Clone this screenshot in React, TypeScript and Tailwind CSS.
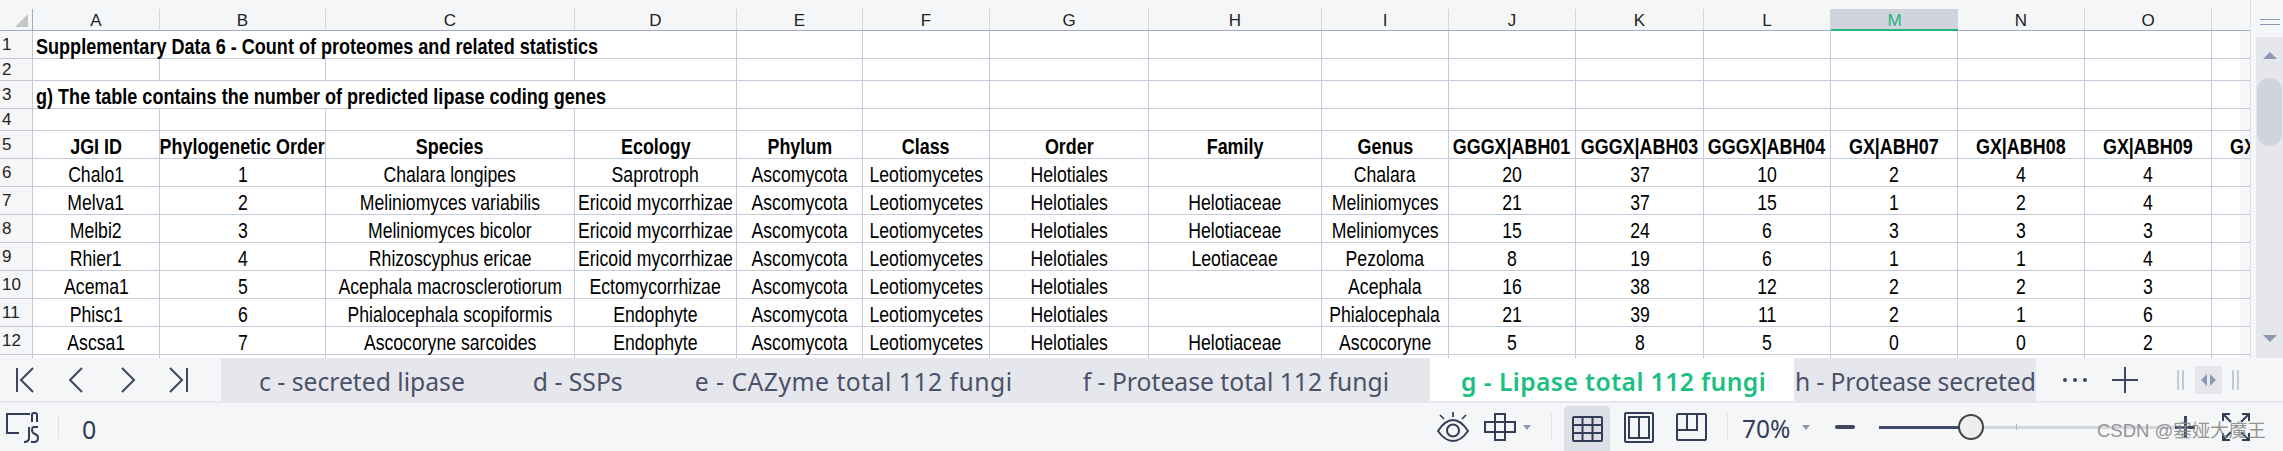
import type { ReactNode } from "react";

const columns = ["A", "B", "C", "D", "E", "F", "G", "H", "I", "J", "K", "L", "M", "N", "O", ""];

const headers = [
  "JGI ID",
  "Phylogenetic Order",
  "Species",
  "Ecology",
  "Phylum",
  "Class",
  "Order",
  "Family",
  "Genus",
  "GGGX|ABH01",
  "GGGX|ABH03",
  "GGGX|ABH04",
  "GX|ABH07",
  "GX|ABH08",
  "GX|ABH09",
  "GX|ABH10",
];

const A = "Ascomycota";
const L = "Leotiomycetes";
const H = "Helotiales";

const rows = [
  ["Chalo1", "1", "Chalara longipes", "Saprotroph", A, L, H, "", "Chalara", "20", "37", "10", "2", "4", "4", ""],
  ["Melva1", "2", "Meliniomyces variabilis", "Ericoid mycorrhizae", A, L, H, "Helotiaceae", "Meliniomyces", "21", "37", "15", "1", "2", "4", ""],
  ["Melbi2", "3", "Meliniomyces bicolor", "Ericoid mycorrhizae", A, L, H, "Helotiaceae", "Meliniomyces", "15", "24", "6", "3", "3", "3", ""],
  ["Rhier1", "4", "Rhizoscyphus ericae", "Ericoid mycorrhizae", A, L, H, "Leotiaceae", "Pezoloma", "8", "19", "6", "1", "1", "4", ""],
  ["Acema1", "5", "Acephala macrosclerotiorum", "Ectomycorrhizae", A, L, H, "", "Acephala", "16", "38", "12", "2", "2", "3", ""],
  ["Phisc1", "6", "Phialocephala scopiformis", "Endophyte", A, L, H, "", "Phialocephala", "21", "39", "11", "2", "1", "6", ""],
  ["Ascsa1", "7", "Ascocoryne sarcoides", "Endophyte", A, L, H, "Helotiaceae", "Ascocoryne", "5", "8", "5", "0", "0", "2", ""],
];

const tabs = [
  { label: "c - secreted lipase", className: "px-[34px]" },
  { label: "d - SSPs", className: "px-[34px]" },
  { label: "e - CAZyme total 112 fungi", className: "pl-[38px] pr-[34px] tracking-[0.5px]" },
  { label: "f - Protease total 112 fungi", className: "pl-[36px] pr-[34px]" },
];

const gridLine = "border-r border-b border-[#c6cadb]";
const cell = `${gridLine} flex items-center justify-center pt-[5px] whitespace-nowrap text-[21.5px] text-black font-['Liberation_Sans',sans-serif]`;
const rowHead = "border-r border-b border-[#c3c7d4] bg-[#f5f6f8] flex items-center pt-[1px] pl-[2px] text-[17px] text-[#222] font-['Liberation_Sans',sans-serif]";

function RowHead({ n }: { n: number }) {
  return <div className={rowHead}>{n}</div>;
}

// the sheet font is Arial Narrow, which isn't installed, so squeeze Liberation Sans
function Cell({ children }: { children: ReactNode }) {
  return (
    <div className={cell}>
      <span className="shrink-0 scale-x-[0.82]">{children}</span>
    </div>
  );
}

function HeaderCell({ children }: { children: ReactNode }) {
  return (
    <div className={`${cell} font-bold`}>
      <span className="shrink-0 scale-x-[0.833]">{children}</span>
    </div>
  );
}

function TitleCell({ children }: { children: ReactNode }) {
  return (
    <div className={`${cell} col-span-4 !justify-start pl-[3px] font-bold`}>
      <span className="shrink-0 origin-left scale-x-[0.84]">{children}</span>
    </div>
  );
}

function Sheet() {
  return (
    <div className="w-[2251px] pt-[9px] overflow-hidden border-r border-[#dcdee4]">
      <div className="grid grid-cols-[33px_127px_166px_249px_162px_126px_127px_159px_173px_127px_127px_128px_127px_127px_127px_127px_127px] grid-rows-[22px_28px_22px_28px_22px_28px_28px_28px_28px_28px_28px_28px_28px_28px] w-[2240px] bg-white">
        <div className="border-r border-b border-[#a3abc4] bg-[#f5f6f8] flex items-end justify-end pr-[4px] pb-[3px]">
          <svg width="13" height="13" viewBox="0 0 13 13">
            <path d="M13 0V13H0Z" fill="#c4c4c4" />
          </svg>
        </div>
        {columns.map((c, i) => (
          <div
            key={i}
            className={
              c === "M"
                ? "border-b-2 border-[#1fb87f] bg-[#d1d4dc] flex items-center justify-center pt-[3px] text-[17px] text-[#1fb87f] font-['Liberation_Sans',sans-serif]"
                : "border-r border-b border-r-[#d3d6de] border-b-[#a3abc4] bg-[#f5f6f8] flex items-center justify-center pt-[3px] text-[17px] text-[#222] font-['Liberation_Sans',sans-serif]"
            }
          >
            {c}
          </div>
        ))}

        <RowHead n={1} />
        <TitleCell>Supplementary Data 6 - Count of proteomes and related statistics</TitleCell>
        {columns.slice(4).map((_, i) => (
          <div key={i} className={gridLine} />
        ))}

        <RowHead n={2} />
        {columns.map((_, i) => (
          <div key={i} className={gridLine} />
        ))}

        <RowHead n={3} />
        <TitleCell>g) The table contains the number of predicted lipase coding genes</TitleCell>
        {columns.slice(4).map((_, i) => (
          <div key={i} className={gridLine} />
        ))}

        <RowHead n={4} />
        {columns.map((_, i) => (
          <div key={i} className={gridLine} />
        ))}

        <RowHead n={5} />
        {headers.map((h) => (
          <HeaderCell key={h}>{h}</HeaderCell>
        ))}

        {rows.map((row, i) => (
          <div key={row[0]} className="contents">
            <RowHead n={i + 6} />
            {row.map((value, j) => (
              <Cell key={j}>{value}</Cell>
            ))}
          </div>
        ))}

        <div className={rowHead}></div>
        {columns.map((_, i) => (
          <div key={i} className={gridLine} />
        ))}
      </div>
    </div>
  );
}

function VScroll() {
  return (
    <div className="w-[32px] flex flex-col">
      <div className="h-[37px] pl-[9px] pt-[19px]">
        <div className="w-[20px] h-[6px] border-y border-[#8d97b3]" />
      </div>
      <div className="flex-1 ml-[5px] bg-[#e6e7ec] flex flex-col items-center pt-[15px] pb-[16px]">
        <div className="w-0 h-0 border-x-[7px] border-x-transparent border-b-[7px] border-b-[#8d97b3]" />
        <div className="mt-[19px] h-[68px] w-[25px] rounded-full bg-[#d1d4dc]" />
        <div className="flex-1" />
        <div className="w-0 h-0 border-x-[7px] border-x-transparent border-t-[7px] border-t-[#8d97b3]" />
      </div>
    </div>
  );
}

function NavButtons() {
  return (
    <div className="w-[221px] shrink-0 bg-[#f5f6f8] flex items-center pl-[15px]">
      <svg width="196" height="26" viewBox="0 0 196 26" fill="none" stroke="#3c465f" strokeWidth="2">
        <path d="M2 1V25M18 1L6 13L18 25" />
        <path d="M67 1L55 13L67 25" />
        <path d="M107 1L119 13L107 25" />
        <path d="M155 1L167 13L155 25M172 1V25" />
      </svg>
    </div>
  );
}

function Tabs() {
  return (
    <div className="h-[45px] flex bg-[#e6e7ec] border-b-2 border-[#e6e7ec] overflow-hidden">
      <NavButtons />
      <div className="w-[1815px] shrink-0 flex pl-[4px] text-[24.7px] text-[#4a5169] font-['Noto_Sans',sans-serif]">
        {tabs.map((t) => (
          <div key={t.label} className={`${t.className} pt-[5px] flex items-center whitespace-nowrap`}>
            {t.label}
          </div>
        ))}
        <div className="ml-[7px] pl-[31px] pr-[28px] pt-[5px] flex items-center whitespace-nowrap bg-white font-semibold tracking-[0.4px] text-[#1bbf7f]">
          g - Lipase total 112 fungi
        </div>
        <div className="pl-[1px] pt-[5px] flex items-center whitespace-nowrap tracking-[-0.15px]">h - Protease secreted</div>
      </div>
      <div className="flex-1 bg-[#f5f6f8] flex items-center pl-[27px]">
        <svg width="220" height="28" viewBox="0 0 220 28" fill="none">
          <circle cx="2" cy="14" r="2" fill="#3c465f" />
          <circle cx="12" cy="14" r="2" fill="#3c465f" />
          <circle cx="22" cy="14" r="2" fill="#3c465f" />
          <path d="M49 14H75M62 1V27" stroke="#3c465f" strokeWidth="2" />
          <path d="M115 4V24M120 4V24M170 4V24M175 4V24" stroke="#a9b0c2" strokeWidth="1.3" />
          <rect x="132" y="0" width="27" height="28" fill="#e6e7ec" />
          <path d="M144 8V20L138 14ZM147 8V20L153 14Z" fill="#8d97b3" />
        </svg>
      </div>
    </div>
  );
}

function StatusBar() {
  const ink = "#333d58";
  return (
    <div className="relative flex-1 flex items-center bg-[#f5f6f8] font-['Noto_Sans',sans-serif] text-[#333d58]">
      <svg className="ml-[6px]" width="33" height="33" viewBox="0 0 33 33" fill="none" stroke={ink} strokeWidth="2">
        <path d="M24 3H1V22H13" />
        <path d="M26 11V4Q26 2 28 2H29Q31 2 31 4V11" />
        <path d="M23 16V27Q23 31 18 31" />
        <path d="M32 16H28Q26 16 26 19Q26 22 29 23Q32 24 32 27Q32 31 28 31H25" />
      </svg>
      <div className="ml-[19px] w-px h-[24px] bg-[#dfe1e6]" />
      <div className="ml-[23px] w-[14px] pt-[4px] text-[25px] leading-none">0</div>

      <svg className="ml-[1341px]" width="32" height="30" viewBox="0 0 32 30" fill="none" stroke={ink} strokeWidth="2">
        <path d="M16 0V5M3 3L7 7M29 3L25 7" strokeWidth="1.7" />
        <path d="M1 19Q8 8 16 8Q24 8 31 19Q24 29 16 29Q8 29 1 19Z" />
        <circle cx="16" cy="18.5" r="6" />
      </svg>
      <svg className="ml-[15px]" width="32" height="28" viewBox="0 0 32 28" fill="none" stroke={ink} strokeWidth="2">
        <path d="M11 1H21V9H31V19H21V27H11V19H1V9H11Z" />
        <path d="M11 9H21V19H11Z" />
      </svg>
      <div className="ml-[7px] w-0 h-0 border-x-[4.5px] border-x-transparent border-t-[5px] border-t-[#8d97b3]" />
      <div className="ml-[20px] w-px h-[28px] bg-[#dfe1e6]" />
      <div className="ml-[12px] w-[46px] h-[45px] self-end bg-[#dcdfe6] rounded-t-[4px] flex items-center justify-center">
        <svg width="31" height="26" viewBox="0 0 31 26" fill="none" stroke={ink} strokeWidth="2">
          <rect x="1" y="1" width="29" height="24" rx="1" />
          <path d="M1 9H30M1 17H30M10.5 1V25M20.5 1V25" />
        </svg>
      </div>
      <svg className="ml-[14px]" width="30" height="31" viewBox="0 0 30 31" fill="none" stroke={ink} strokeWidth="2">
        <rect x="1" y="1" width="28" height="29" rx="1" />
        <rect x="5" y="5" width="20" height="21" />
        <path d="M15 5V26" />
      </svg>
      <svg className="ml-[22px]" width="31" height="28" viewBox="0 0 31 28" fill="none" stroke={ink} strokeWidth="2">
        <rect x="1" y="1" width="29" height="26" rx="1" />
        <path d="M1 17H21V1M11 1V17" />
      </svg>
      <div className="ml-[20px] w-px h-[28px] bg-[#dfe1e6]" />
      <div className="ml-[14px] w-[48px] pt-[4px] text-[24.5px] leading-none whitespace-nowrap">70%</div>
      <div className="ml-[12px] w-0 h-0 border-x-[4.5px] border-x-transparent border-t-[5px] border-t-[#8d97b3]" />
      <div className="ml-[25px] w-[20px] h-[4px] rounded-full bg-[#3c465f]" />

      <div className="ml-[24px] relative w-[312px] h-[26px] flex items-center">
        <div className="w-[80px] h-[3px] bg-[#3f4a66]" />
        <div className="w-[232px] h-[3px] bg-[#d3d7dc]" />
        <div className="absolute left-[79px] top-0 w-[26px] h-[26px] rounded-full bg-[#eeeeee] border-2 border-[#444]" />
        <div className="absolute left-[137px] top-[10px] w-px h-[6px] bg-[#b5b9c0]" />
        <div className="absolute left-[305px] top-[2px] w-[3px] h-[22px] bg-[#3c465f]" />
        <div className="absolute left-[296px] top-[11.5px] w-[20px] h-[3px] bg-[#3c465f]" />
      </div>
      <svg className="ml-[31px]" width="28" height="28" viewBox="0 0 28 28" fill="none" stroke={ink} strokeWidth="2">
        <path d="M1 8V1H8M20 1H27V8M27 20V27H20M8 27H1V20" />
        <path d="M2 2L9 9M26 2L19 9M26 26L19 19M2 26L9 19" />
      </svg>

      <div className="absolute left-[2097px] top-[19px] text-[18.5px] leading-none whitespace-nowrap text-[#888888]/90 font-['Liberation_Sans','Noto_Sans_CJK_SC',sans-serif]">
        CSDN @塞娅大魔王
      </div>
    </div>
  );
}

export default function App() {
  return (
    <div className="w-[2283px] h-[451px] overflow-hidden flex flex-col bg-[#f5f6f8]">
      <div className="h-[358px] flex shrink-0">
        <Sheet />
        <VScroll />
      </div>
      <Tabs />
      <StatusBar />
    </div>
  );
}
